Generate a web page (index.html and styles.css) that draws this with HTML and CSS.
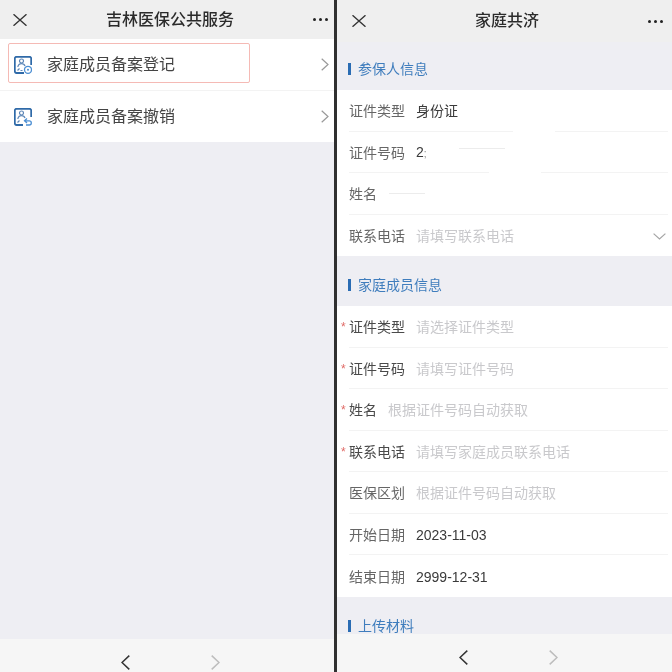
FILE: index.html
```html
<!DOCTYPE html>
<html>
<head>
    <meta charset="UTF-8">
    <title>家庭共济</title>
    <link rel="stylesheet" href="styles.css">
</head>
<body>
    <div class="screen">
        <!-- 左侧：服务列表 -->
        <div class="panel panel-left">
            <div class="header header-left">
                <svg class="close" viewBox="0 0 14 12"><path d="M.5.3 13.5 11.7M13.5.3.5 11.7"/></svg>
                <div class="title">吉林医保公共服务</div>
                <div class="dots"><i></i><i></i><i></i></div>
            </div>
            <div class="content">
                <div class="menu">
                    <div class="menu-item">
                        <div class="highlight"></div>
                        <svg class="menu-icon" viewBox="0 0 18 18">
                            <path class="icon-frame" d="M10 17H2.500A1.700 1.700 0 0 1 .8 15.300V2.500A1.700 1.700 0 0 1 2.500.8H15.500A1.700 1.700 0 0 1 17.200 2.500V9"/>
                            <circle class="icon-person" cx="7.500" cy="5" r="2"/>
                            <path class="icon-person" d="M3.800 11c.4-2.200 1.800-3.400 3.700-3.400s3 .9 3.500 2.400M3.500 14.500l2-2M6.500 14.500h2"/>
                            <circle class="icon-badge" cx="14" cy="13.800" r="3.500"/>
                            <circle class="icon-dot" cx="14" cy="13.800" r="1"/>
                        </svg>
                        <span class="menu-text">家庭成员备案登记</span>
                        <svg class="arrow" viewBox="0 0 8 13"><path d="M.7.7 7 6.500.7 12.300"/></svg>
                    </div>
                    <div class="menu-item">
                        <svg class="menu-icon" viewBox="0 0 18 18">
                            <path class="icon-frame" d="M9 17H2.500A1.700 1.700 0 0 1 .8 15.300V2.500A1.700 1.700 0 0 1 2.500.8H15.500A1.700 1.700 0 0 1 17.200 2.500V9"/>
                            <circle class="icon-person" cx="7.500" cy="5" r="2"/>
                            <path class="icon-person" d="M3.800 11c.4-2.200 1.800-3.400 3.700-3.400s3 .9 3.500 2.400M3.500 14.500l2-2"/>
                            <path class="icon-badge" d="M13 10.500 10.500 12.800 13 15M10.800 12.800h4.400a2 2 0 0 1 0 4.200H12"/>
                        </svg>
                        <span class="menu-text">家庭成员备案撤销</span>
                        <svg class="arrow" viewBox="0 0 8 13"><path d="M.7.7 7 6.500.7 12.300"/></svg>
                    </div>
                </div>
            </div>
            <div class="toolbar toolbar-left">
                <svg class="nav nav-back" viewBox="0 0 9 15"><path d="M8.300.6 1 7.500l7.300 6.900"/></svg>
                <svg class="nav nav-next" viewBox="0 0 9 15"><path d="M.7.600 8 7.500.7 14.400"/></svg>
            </div>
        </div>

        <div class="split"></div>

        <!-- 右侧：家庭共济表单 -->
        <div class="panel panel-right">
            <div class="header header-right">
                <svg class="close" viewBox="0 0 14 12"><path d="M.5.3 13.500 11.700M13.500.3.500 11.700"/></svg>
                <div class="title">家庭共济</div>
                <div class="dots"><i></i><i></i><i></i></div>
            </div>
            <div class="content">
                <div class="section-title"><span>参保人信息</span></div>
                <div class="group">
                    <div class="row">
                        <label>证件类型</label><span class="value">身份证</span>
                        <i class="erase erase-one"></i>
                    </div>
                    <div class="row">
                        <label>证件号码</label><span class="value">2<b class="cut">;</b></span>
                        <i class="erase erase-two"></i>
                        <i class="smudge smudge-id"></i>
                    </div>
                    <div class="row">
                        <label>姓名</label>
                        <i class="smudge smudge-name"></i>
                    </div>
                    <div class="row">
                        <label>联系电话</label><span class="hint">请填写联系电话</span>
                        <svg class="down" viewBox="0 0 13 7"><path d="M.6.6 6.500 6 12.400.6"/></svg>
                    </div>
                </div>

                <div class="section-title"><span>家庭成员信息</span></div>
                <div class="group">
                    <div class="row required">
                        <label>证件类型</label><span class="hint">请选择证件类型</span>
                    </div>
                    <div class="row required">
                        <label>证件号码</label><span class="hint">请填写证件号码</span>
                    </div>
                    <div class="row required">
                        <label>姓名</label><span class="hint">根据证件号码自动获取</span>
                    </div>
                    <div class="row required">
                        <label>联系电话</label><span class="hint">请填写家庭成员联系电话</span>
                    </div>
                    <div class="row">
                        <label>医保区划</label><span class="hint">根据证件号码自动获取</span>
                    </div>
                    <div class="row">
                        <label>开始日期</label><span class="value">2023-11-03</span>
                    </div>
                    <div class="row">
                        <label>结束日期</label><span class="value">2999-12-31</span>
                    </div>
                </div>

                <div class="section-title"><span>上传材料</span></div>
            </div>
            <div class="toolbar toolbar-right">
                <svg class="nav nav-back" viewBox="0 0 9 15"><path d="M8.300.6 1 7.500l7.300 6.900"/></svg>
                <svg class="nav nav-next" viewBox="0 0 9 15"><path d="M.7.600 8 7.500.7 14.400"/></svg>
            </div>
        </div>
    </div>
</body>
</html>
```

FILE: styles.css
```css
html, body {
    margin: 0;
    padding: 0;
    background-color: #eeeef3;
}
body {
    font-family: 'Liberation Sans', 'Noto Sans CJK SC', sans-serif;
    color: #333;
}
.screen {
    display: flex;
    width: 672px;
    height: 672px;
    overflow: hidden;
    filter: blur(0.6px);
}
.split {
    width: 3px;
    background-color: #303030;
}
.panel {
    display: flex;
    flex-direction: column;
    height: 672px;
    background-color: #eeeef3;
}
.panel-left {
    width: 334px;
}
.panel-right {
    width: 335px;
}
.content {
    flex: 1;
    min-height: 0;
    overflow: hidden;
}

/* 顶部导航 */
.header {
    display: flex;
    justify-content: space-between;
    align-items: center;
    flex: none;
    box-sizing: border-box;
    background-color: #efefef;
}
.header-left {
    height: 39px;
    padding: 0 4px 0 13px;
}
.header-right {
    height: 42px;
    padding: 0 7px 0 15px;
}
.title {
    font-size: 16px;
    line-height: 22px;
    font-weight: 500;
    color: #2b2b2b;
}
.close {
    width: 14px;
    height: 12px;
    fill: none;
    stroke: #333;
    stroke-width: 1.4;
}
.dots {
    display: flex;
    gap: 3px;
    width: 17px;
}
.dots i {
    width: 3px;
    height: 3px;
    border-radius: 50%;
    background-color: #222;
}

/* 服务列表 */
.menu {
    background-color: #fff;
}
.menu-item {
    position: relative;
    display: flex;
    align-items: center;
    height: 51px;
    padding: 0 5px 0 14px;
}
.menu-item:first-child {
    border-bottom: 1px solid #f3f3f3;
}
.menu-icon {
    flex: none;
    width: 18px;
    height: 18px;
    margin-right: 15px;
    fill: none;
}
.icon-frame {
    stroke: #2f6aa8;
    stroke-width: 1.8;
}
.icon-person {
    stroke: #5f88b8;
    stroke-width: 1.2;
}
.icon-badge {
    stroke: #4c8fd3;
    stroke-width: 1.3;
}
.icon-dot {
    fill: #4c8fd3;
}
.menu-text {
    flex: 1;
    font-size: 16px;
    line-height: 22px;
    color: #444;
}
.arrow {
    width: 8px;
    height: 13px;
    fill: none;
    stroke: #999;
    stroke-width: 1.2;
}
.highlight {
    position: absolute;
    left: 8px;
    top: 4px;
    width: 240px;
    height: 38px;
    border: 1.5px solid #f5bab5;
    border-radius: 2px;
}

/* 底部工具栏 */
.toolbar {
    display: flex;
    flex: none;
    box-sizing: border-box;
    align-items: flex-start;
    justify-content: center;
    gap: 81px;
    padding-top: 16px;
    background-color: #f6f6f6;
}
.toolbar-left {
    height: 33px;
    padding-left: 7px;
}
.toolbar-right {
    height: 38px;
    padding-left: 7px;
}
.nav {
    width: 9px;
    height: 15px;
    fill: none;
    stroke-width: 1.5;
}
.nav-back {
    stroke: #333;
}
.nav-next {
    stroke: #bdbdbd;
}

/* 表单 */
.section-title {
    display: flex;
    align-items: center;
    height: 48px;
    padding: 6px 0 0 11px;
    box-sizing: border-box;
    font-size: 14px;
    line-height: 20px;
    color: #3f7dbd;
}
.section-title span {
    display: flex;
    align-items: center;
    gap: 7px;
}
.section-title span::before {
    content: "";
    width: 3px;
    height: 12px;
    background-color: #2a6cb3;
}
.group {
    margin-bottom: 2px;
    padding-left: 12px;
    background-color: #fff;
}
.row {
    position: relative;
    display: flex;
    align-items: center;
    gap: 11px;
    box-sizing: border-box;
    height: 41.5px;
    margin-right: 4px;
    padding-top: 2px;
    border-bottom: 1px solid #f3f3f3;
    font-size: 14px;
    line-height: 20px;
}
.row:last-child {
    border-bottom: none;
}
.row label {
    color: #666;
}
.required label {
    color: #4a4a4a;
}
.required::before {
    content: "*";
    position: absolute;
    left: -8px;
    top: 13px;
    font-size: 12px;
    line-height: 16px;
    color: #e06a66;
}
.value {
    color: #3a3a3a;
}
.hint {
    color: #c9c9cc;
}
.cut {
    font-weight: normal;
    font-size: 10px;
    color: #888;
}
.down {
    position: absolute;
    right: 2px;
    top: 18px;
    width: 13px;
    height: 7px;
    fill: none;
    stroke: #a5a5a5;
    stroke-width: 1.2;
}

/* 打码痕迹 */
.erase {
    position: absolute;
    bottom: -1px;
    height: 1px;
    background-color: #fff;
}
.erase-one {
    left: 164px;
    width: 42px;
}
.erase-two {
    left: 140px;
    width: 52px;
}
.smudge {
    position: absolute;
    height: 1px;
    background-color: #ececec;
}
.smudge-id {
    left: 110px;
    top: 16px;
    width: 46px;
}
.smudge-name {
    left: 40px;
    top: 20px;
    width: 36px;
}
```
